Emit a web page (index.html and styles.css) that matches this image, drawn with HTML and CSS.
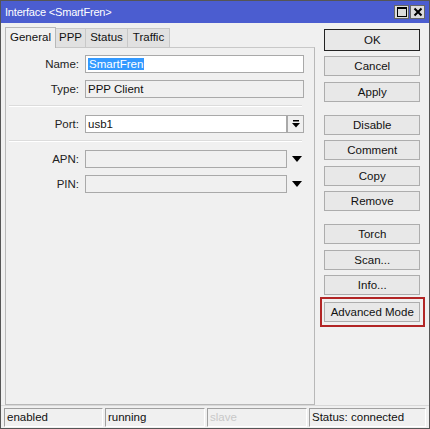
FILE: index.html
```html
<!DOCTYPE html>
<html>
<head>
<meta charset="utf-8">
<link rel="stylesheet" href="styles.css">
</head>
<body>
<div class="window">
  <div class="titlebar">
    <span class="title">Interface &lt;SmartFren&gt;</span>
    <div class="tbtns">
      <span class="tbtn"><svg width="12" height="12" viewBox="0 0 12 12"><rect x="1.5" y="1.5" width="9" height="9" fill="none" stroke="#000" stroke-width="1"/><rect x="1" y="1" width="10" height="2" fill="#000"/></svg></span>
      <span class="tbtn"><svg width="12" height="12" viewBox="0 0 12 12"><path d="M2.5 2.5 L9.5 9.5 M9.5 2.5 L2.5 9.5" stroke="#000" stroke-width="2"/></svg></span>
    </div>
  </div>
  <div class="main">
    <div class="leftcol">
      <div class="tabs">
        <div class="tab active t1">General</div>
        <div class="tab t2">PPP</div>
        <div class="tab t3">Status</div>
        <div class="tab t4">Traffic</div>
      </div>
      <div class="panel">
        <div class="row first">
          <label>Name:</label>
          <div class="field"><span class="sel">SmartFren</span></div>
        </div>
        <div class="row">
          <label>Type:</label>
          <div class="field ro">PPP Client</div>
        </div>
        <div class="sep"></div>
        <div class="row">
          <label>Port:</label>
          <div class="field short">usb1</div>
          <div class="ddbtn"><svg width="10" height="10" viewBox="0 0 10 10"><rect x="2" y="1" width="6" height="1.5" fill="#000"/><path d="M1 4 H9 L5 8.5 Z" fill="#000"/></svg></div>
        </div>
        <div class="sep"></div>
        <div class="row">
          <label>APN:</label>
          <div class="field short ro"></div>
          <div class="arrow"><svg width="10" height="6" viewBox="0 0 10 6"><path d="M0 0 H10 L5 6 Z" fill="#000"/></svg></div>
        </div>
        <div class="row">
          <label>PIN:</label>
          <div class="field short ro"></div>
          <div class="arrow"><svg width="10" height="6" viewBox="0 0 10 6"><path d="M0 0 H10 L5 6 Z" fill="#000"/></svg></div>
        </div>
      </div>
    </div>
    <div class="rightcol">
      <div class="btn ok">OK</div>
      <div class="btn">Cancel</div>
      <div class="btn">Apply</div>
      <div class="btn gap">Disable</div>
      <div class="btn">Comment</div>
      <div class="btn">Copy</div>
      <div class="btn">Remove</div>
      <div class="btn gap">Torch</div>
      <div class="btn">Scan...</div>
      <div class="btn">Info...</div>
      <div class="hl"><div class="btn">Advanced Mode</div></div>
    </div>
  </div>
  <div class="statusbar">
    <div class="cell c1">enabled</div>
    <div class="cell c2">running</div>
    <div class="cell c3 dim">slave</div>
    <div class="cell c4">Status: connected</div>
  </div>
</div>
</body>
</html>
```
FILE: styles.css
```css
* { box-sizing: border-box; }
html, body { margin: 0; padding: 0; background: #fff; }
body { font-family: "Liberation Sans", Arial, sans-serif; font-size: 11px; color: #111; }
.window {
  width: 430px; height: 429px;
  border: 1px solid #555;
  background: #f0f0f0;
  display: flex; flex-direction: column;
}
.titlebar {
  height: 22px; background: #4b5dd0;
  display: flex; align-items: center; justify-content: space-between;
  padding: 0 4px 0 4px;
}
.title { color: #fff; font-size: 11px; letter-spacing: -0.2px; }
.tbtns { display: flex; gap: 1px; }
.tbtn {
  width: 15px; height: 14px; background: #dcdcdc; border: 1px solid #666;
  display: flex; align-items: center; justify-content: center;
}
.main { flex: 1; display: flex; padding: 3px 0 0 4px; }
.leftcol { width: 311px; display: flex; flex-direction: column; }
.tabs { display: flex; height: 21px; align-items: flex-end; }
.tab {
  height: 19px; line-height: 17px; text-align: center;
  border: 1px solid #c8c8c8; border-bottom: none; margin-left: -1px;
  background: #e1e1e1; font-size: 11.5px;
}
.tab:first-child { margin-left: 0; }
.t1 { width: 51px; }
.t2 { width: 31px; }
.t3 { width: 43px; }
.t4 { width: 43px; }
.tab.active {
  height: 21px; background: #f0f0f0; border-color: #b8b8b8; z-index: 1;
  position: relative; top: 1px; line-height: 19px;
}
.panel {
  flex: 1; border: 1px solid #b8b8b8; border-top-color: #c8c8c8;
  background: #f0f0f0; padding: 7px 0 0 0;
}
.row { display: flex; align-items: center; height: 18px; margin-bottom: 7px; }
.row label { width: 79px; text-align: right; padding-right: 6px; color: #222; font-size: 11.5px; }
.field {
  width: 219px; height: 18px; border: 1px solid #a9a9a9; background: #fff;
  padding: 0 2px; line-height: 16px; white-space: nowrap; font-size: 11.5px;
}
.field.ro { background: #f0f0f0; }
.field.short { width: 202px; }
.sel { background: #3399ff; color: #fff; padding: 0 1px; }
.ddbtn {
  width: 17px; height: 18px; border: 1px solid #a9a9a9; background: #f0f0f0;
  display: flex; align-items: center; justify-content: center; margin-left: 0;
}
.arrow { width: 17px; height: 18px; display: flex; align-items: center; justify-content: center; margin-left: 1px; }
.sep { height: 2px; background: #dcdcdc; border-bottom: 1px solid #fff; margin: 2px 12px 8px 3px; }
.rightcol {
  width: 110px; margin-left: 4px;
  display: flex; flex-direction: column; padding: 3px 0 0 5px;
}
.btn {
  width: 96px; height: 20px; border: 1px solid #adadad; background: #e8e8e8;
  text-align: center; line-height: 18px; margin-bottom: 5.5px; font-size: 11.5px;
}
.btn.ok { border: 1px solid #222; height: 22px; margin-bottom: 5px; line-height: 20px; }
.btn.gap { margin-top: 7.5px; }
.hl {
  width: 105px; border: 2px solid #b22525; padding: 3px 2px; margin-left: -4px; margin-top: -3.5px;
}
.hl .btn { margin-bottom: 0; }
.statusbar {
  height: 23px; display: flex; padding: 2px 3px 2px 3px; gap: 2px;
  border-top: 1px solid #d8d8d8;
}
.cell {
  height: 19px; border-top: 1px solid #a0a0a0; border-left: 1px solid #a0a0a0;
  border-bottom: 1px solid #fff; border-right: 1px solid #fff;
  padding: 0 2px; line-height: 17px; font-size: 11.5px;
}
.c1 { width: 99px; }
.c2 { width: 100px; }
.c3 { width: 100px; color: #c8c8c8; }
.c4 { flex: 1; }
```
